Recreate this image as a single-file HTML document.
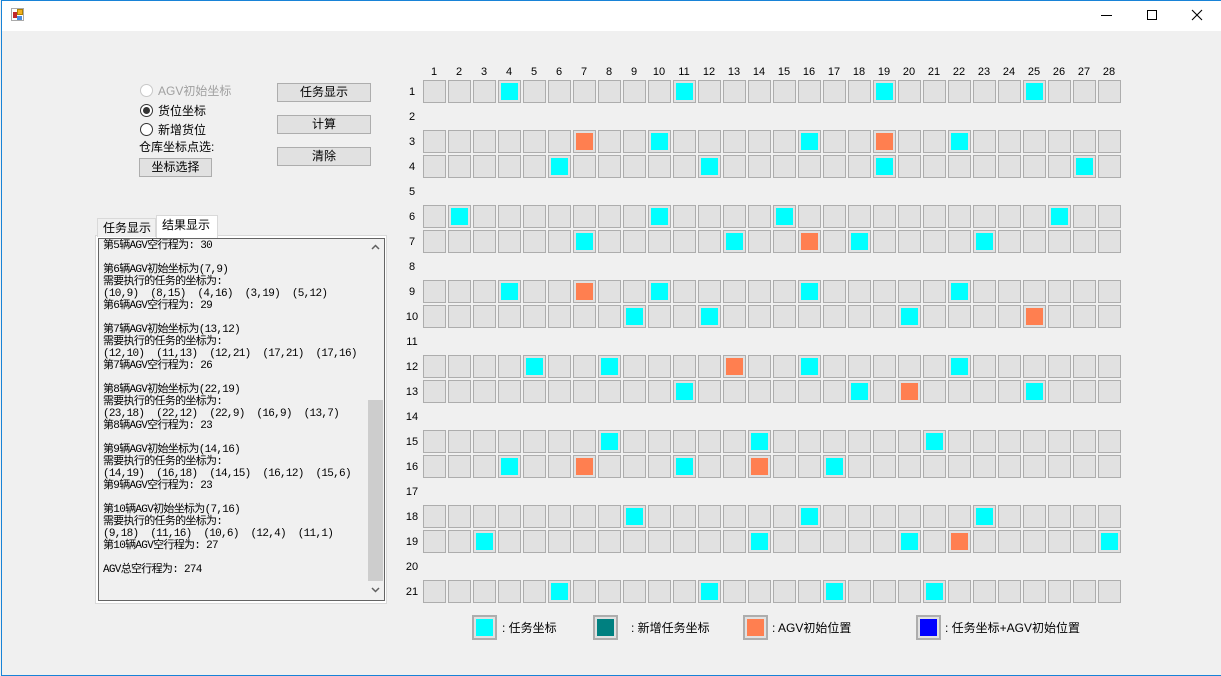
<!DOCTYPE html>
<html><head><meta charset="utf-8">
<style>
*{margin:0;padding:0;box-sizing:border-box}
body{width:1221px;height:676px;background:#f0f0f0;position:relative;overflow:hidden;font-family:"Liberation Sans","Noto Sans CJK SC",sans-serif;font-size:12px;color:#000}
.abs{position:absolute}
.win{position:absolute;left:1px;top:0;width:1220px;height:676px;border:1px solid #1883d7;border-right:none}
.title{position:absolute;left:2px;top:1px;width:1219px;height:30px;background:#fff}
.btn{position:absolute;background:#e1e1e1;border:1px solid #adadad;text-align:center;font-size:12px;line-height:16px}
.radio{position:absolute;width:13px;height:13px;border:1px solid #333;border-radius:50%;background:#fff}
.lbl{position:absolute;font-size:12px;line-height:14px;white-space:nowrap}
.tb{position:absolute;left:98px;top:238px;width:287px;height:363px;border:1px solid #646464;background:#f0f0f0;overflow:hidden}
.txt{position:absolute;left:4px;top:1px;font-family:"Liberation Mono","Noto Sans CJK SC",monospace;font-size:11px;line-height:12px;white-space:pre;letter-spacing:-0.7px}
.leg{position:absolute;width:25px;height:25px;border:2px solid #adadad;background:#e1e1e1}
.leg i{position:absolute;left:2px;top:2px;width:17px;height:17px}
</style></head><body>
<div class="title"></div>
<div class="win"></div>
<div class="abs" style="left:11px;top:8px;width:13px;height:13px;border:1px solid #aaa;background:#fff"></div>
<div class="abs" style="left:13px;top:12px;width:4px;height:6px;background:#c0282d"></div>
<div class="abs" style="left:17px;top:9px;width:6px;height:6px;background:#f2b01e;border:1px solid #b08000"></div>
<div class="abs" style="left:17px;top:16px;width:5px;height:4px;background:#4a8de0"></div>
<div class="abs" style="left:1101px;top:15px;width:11px;height:1px;background:#000"></div>
<div class="abs" style="left:1147px;top:10px;width:10px;height:10px;border:1px solid #000"></div>
<svg class="abs" style="left:1191px;top:9px" width="12" height="12"><path d="M1 1L11 11M11 1L1 11" stroke="#000" stroke-width="1.1"/></svg>

<div class="radio" style="left:140px;top:84px;border-color:#c8c8c8"></div>
<div class="lbl" style="left:158px;top:84px;color:#a0a0a0">AGV初始坐标</div>
<div class="radio" style="left:140px;top:104px"></div>
<div class="abs" style="left:143px;top:107px;width:7px;height:7px;border-radius:50%;background:#333"></div>
<div class="lbl" style="left:158px;top:104px">货位坐标</div>
<div class="radio" style="left:140px;top:123px"></div>
<div class="lbl" style="left:158px;top:123px">新增货位</div>
<div class="lbl" style="left:139px;top:140px">仓库坐标点选:</div>
<div class="btn" style="left:139px;top:158px;width:73px;height:19px">坐标选择</div>
<div class="btn" style="left:277px;top:83px;width:94px;height:19px">任务显示</div>
<div class="btn" style="left:277px;top:115px;width:94px;height:19px">计算</div>
<div class="btn" style="left:277px;top:147px;width:94px;height:19px">清除</div>

<div class="abs" style="left:95px;top:235px;width:292px;height:369px;border:1px solid #d9d9d9;background:#fff"></div>
<div class="abs" style="left:97px;top:218px;width:59px;height:19px;border:1px solid #d9d9d9;border-bottom:none;background:#f0f0f0"></div>
<div class="lbl" style="left:103px;top:221px">任务显示</div>
<div class="abs" style="left:156px;top:215px;width:62px;height:23px;border:1px solid #d9d9d9;border-bottom:none;background:#fff"></div>
<div class="lbl" style="left:162px;top:218px">结果显示</div>
<div class="tb">
<div class="txt">第5辆AGV空行程为: 30

第6辆AGV初始坐标为(7,9)
需要执行的任务的坐标为:
(10,9)  (8,15)  (4,16)  (3,19)  (5,12)
第6辆AGV空行程为: 29

第7辆AGV初始坐标为(13,12)
需要执行的任务的坐标为:
(12,10)  (11,13)  (12,21)  (17,21)  (17,16)
第7辆AGV空行程为: 26

第8辆AGV初始坐标为(22,19)
需要执行的任务的坐标为:
(23,18)  (22,12)  (22,9)  (16,9)  (13,7)
第8辆AGV空行程为: 23

第9辆AGV初始坐标为(14,16)
需要执行的任务的坐标为:
(14,19)  (16,18)  (14,15)  (16,12)  (15,6)
第9辆AGV空行程为: 23

第10辆AGV初始坐标为(7,16)
需要执行的任务的坐标为:
(9,18)  (11,16)  (10,6)  (12,4)  (11,1)
第10辆AGV空行程为: 27

AGV总空行程为: 274</div>
<div class="abs" style="left:268px;top:0;width:17px;height:361px;background:#f0f0f0"></div>
<div class="abs" style="left:269px;top:161px;width:15px;height:181px;background:#cdcdcd"></div>
<svg class="abs" style="left:272px;top:5px" width="9" height="6"><path d="M1 5L4.5 1.5L8 5" stroke="#606060" fill="none" stroke-width="1.5"/></svg>
<svg class="abs" style="left:272px;top:348px" width="9" height="6"><path d="M1 1L4.5 4.5L8 1" stroke="#606060" fill="none" stroke-width="1.5"/></svg>
</div>

<svg class="abs" style="left:400px;top:60px" width="730" height="550" font-family="Liberation Sans, sans-serif" font-size="11">
<defs><pattern id="c" x="0" y="0" width="25" height="25" patternUnits="userSpaceOnUse"><rect x="0.5" y="0.5" width="22" height="22" fill="#e1e1e1" stroke="#adadad"/></pattern></defs>
<g text-anchor="middle">
<text x="34" y="15">1</text><text x="59" y="15">2</text><text x="84" y="15">3</text><text x="109" y="15">4</text><text x="134" y="15">5</text><text x="159" y="15">6</text><text x="184" y="15">7</text><text x="209" y="15">8</text><text x="234" y="15">9</text><text x="259" y="15">10</text><text x="284" y="15">11</text><text x="309" y="15">12</text><text x="334" y="15">13</text><text x="359" y="15">14</text><text x="384" y="15">15</text><text x="409" y="15">16</text><text x="434" y="15">17</text><text x="459" y="15">18</text><text x="484" y="15">19</text><text x="509" y="15">20</text><text x="534" y="15">21</text><text x="559" y="15">22</text><text x="584" y="15">23</text><text x="609" y="15">24</text><text x="634" y="15">25</text><text x="659" y="15">26</text><text x="684" y="15">27</text><text x="709" y="15">28</text>
<text x="12" y="35">1</text><text x="12" y="60">2</text><text x="12" y="85">3</text><text x="12" y="110">4</text><text x="12" y="135">5</text><text x="12" y="160">6</text><text x="12" y="185">7</text><text x="12" y="210">8</text><text x="12" y="235">9</text><text x="12" y="260">10</text><text x="12" y="285">11</text><text x="12" y="310">12</text><text x="12" y="335">13</text><text x="12" y="360">14</text><text x="12" y="385">15</text><text x="12" y="410">16</text><text x="12" y="435">17</text><text x="12" y="460">18</text><text x="12" y="485">19</text><text x="12" y="510">20</text><text x="12" y="535">21</text>
</g>
<g transform="translate(23,20)">
<rect x="0" y="0" width="700" height="23" fill="url(#c)"/>
<rect x="0" y="50" width="700" height="23" fill="url(#c)"/>
<rect x="0" y="75" width="700" height="23" fill="url(#c)"/>
<rect x="0" y="125" width="700" height="23" fill="url(#c)"/>
<rect x="0" y="150" width="700" height="23" fill="url(#c)"/>
<rect x="0" y="200" width="700" height="23" fill="url(#c)"/>
<rect x="0" y="225" width="700" height="23" fill="url(#c)"/>
<rect x="0" y="275" width="700" height="23" fill="url(#c)"/>
<rect x="0" y="300" width="700" height="23" fill="url(#c)"/>
<rect x="0" y="350" width="700" height="23" fill="url(#c)"/>
<rect x="0" y="375" width="700" height="23" fill="url(#c)"/>
<rect x="0" y="425" width="700" height="23" fill="url(#c)"/>
<rect x="0" y="450" width="700" height="23" fill="url(#c)"/>
<rect x="0" y="500" width="700" height="23" fill="url(#c)"/>
<g fill="#00ffff">
<rect x="78" y="3" width="17" height="17"/><rect x="253" y="3" width="17" height="17"/><rect x="453" y="3" width="17" height="17"/><rect x="603" y="3" width="17" height="17"/>
<rect x="228" y="53" width="17" height="17"/><rect x="378" y="53" width="17" height="17"/><rect x="528" y="53" width="17" height="17"/>
<rect x="128" y="78" width="17" height="17"/><rect x="278" y="78" width="17" height="17"/><rect x="453" y="78" width="17" height="17"/><rect x="653" y="78" width="17" height="17"/>
<rect x="28" y="128" width="17" height="17"/><rect x="228" y="128" width="17" height="17"/><rect x="353" y="128" width="17" height="17"/><rect x="628" y="128" width="17" height="17"/>
<rect x="153" y="153" width="17" height="17"/><rect x="303" y="153" width="17" height="17"/><rect x="428" y="153" width="17" height="17"/><rect x="553" y="153" width="17" height="17"/>
<rect x="78" y="203" width="17" height="17"/><rect x="228" y="203" width="17" height="17"/><rect x="378" y="203" width="17" height="17"/><rect x="528" y="203" width="17" height="17"/>
<rect x="203" y="228" width="17" height="17"/><rect x="278" y="228" width="17" height="17"/><rect x="478" y="228" width="17" height="17"/>
<rect x="103" y="278" width="17" height="17"/><rect x="178" y="278" width="17" height="17"/><rect x="378" y="278" width="17" height="17"/><rect x="528" y="278" width="17" height="17"/>
<rect x="253" y="303" width="17" height="17"/><rect x="428" y="303" width="17" height="17"/><rect x="603" y="303" width="17" height="17"/>
<rect x="178" y="353" width="17" height="17"/><rect x="328" y="353" width="17" height="17"/><rect x="503" y="353" width="17" height="17"/>
<rect x="78" y="378" width="17" height="17"/><rect x="253" y="378" width="17" height="17"/><rect x="403" y="378" width="17" height="17"/>
<rect x="203" y="428" width="17" height="17"/><rect x="378" y="428" width="17" height="17"/><rect x="553" y="428" width="17" height="17"/>
<rect x="53" y="453" width="17" height="17"/><rect x="328" y="453" width="17" height="17"/><rect x="478" y="453" width="17" height="17"/><rect x="678" y="453" width="17" height="17"/>
<rect x="128" y="503" width="17" height="17"/><rect x="278" y="503" width="17" height="17"/><rect x="403" y="503" width="17" height="17"/><rect x="503" y="503" width="17" height="17"/>
</g>
<g fill="#ff7f50">
<rect x="153" y="53" width="17" height="17"/><rect x="453" y="53" width="17" height="17"/>
<rect x="378" y="153" width="17" height="17"/>
<rect x="153" y="203" width="17" height="17"/>
<rect x="603" y="228" width="17" height="17"/>
<rect x="303" y="278" width="17" height="17"/>
<rect x="478" y="303" width="17" height="17"/>
<rect x="153" y="378" width="17" height="17"/><rect x="328" y="378" width="17" height="17"/>
<rect x="528" y="453" width="17" height="17"/>
</g>
</g>
</svg>

<div class="leg" style="left:472px;top:615px"><i style="background:#00ffff"></i></div>
<div class="lbl" style="left:502px;top:621px">: 任务坐标</div>
<div class="leg" style="left:593px;top:615px"><i style="background:#008080"></i></div>
<div class="lbl" style="left:631px;top:621px">: 新增任务坐标</div>
<div class="leg" style="left:743px;top:615px"><i style="background:#ff7f50"></i></div>
<div class="lbl" style="left:772px;top:621px">: AGV初始位置</div>
<div class="leg" style="left:916px;top:615px"><i style="background:#0000ff"></i></div>
<div class="lbl" style="left:945px;top:621px">: 任务坐标+AGV初始位置</div>
</body></html>
